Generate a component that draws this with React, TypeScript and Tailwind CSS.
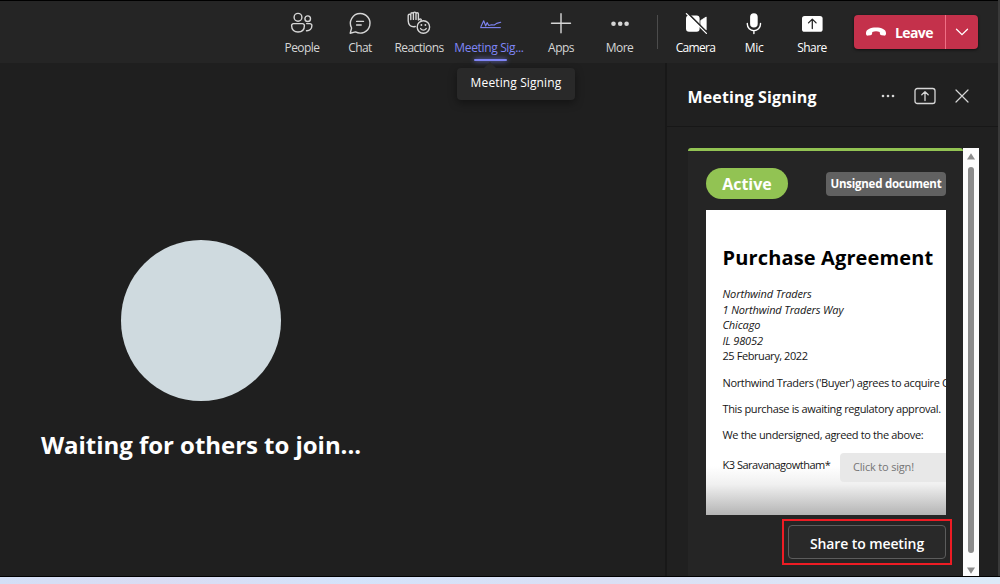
import type { ReactNode } from "react";

function ToolItem({ label, width, color = "text-[#d6d6d6]", track = "tracking-[-0.55px]", children }: {
  label: string; width: string; color?: string; track?: string; children: ReactNode;
}) {
  return (
    <button className={`flex flex-col items-center ${width} ${color}`}>
      <svg viewBox="0 0 24 24" className="h-6 w-6 shrink-0 overflow-visible" fill="none" stroke="currentColor" strokeWidth="1.4" strokeLinecap="round" strokeLinejoin="round">
        {children}
      </svg>
      <span className={`mt-[4.5px] whitespace-nowrap text-[12px] leading-4 ${track}`}>{label}</span>
    </button>
  );
}

function Toolbar() {
  return (
    <header className="flex h-[63px] shrink-0 border-t-[1px] border-black bg-[#252525] pl-[273px] pt-[10px]">
      <ToolItem label="People" width="w-[58px]">
        <circle cx="8" cy="6.3" r="3.9" />
        <circle cx="17.7" cy="7.7" r="2.8" />
        <path d="M3.5 12.6h9a1.9 1.9 0 0 1 1.9 1.9c0 4.5-2.9 6.5-6.4 6.5s-6.4-2-6.4-6.5a1.9 1.9 0 0 1 1.9-1.9Z" />
        <path d="M16.6 12.6H20a1.9 1.9 0 0 1 1.9 1.9c0 3.6-2.4 5.4-5.4 5.2" />
      </ToolItem>
      <ToolItem label="Chat" width="w-[58px]">
        <path d="M12.2 2.5a9.8 9.8 0 1 1-4.7 18.4L2.2 22.2l1.4-5.2a9.8 9.8 0 0 1 8.6-14.5Z" />
        <path d="M8.6 10.4h6.9M8.6 14h4.6" />
      </ToolItem>
      <ToolItem label="Reactions" width="w-[60px]">
        <path d="M8.3 15.5C3.6 16.4 1.2 13.6 1.2 9.8V4.6a1.3 1.3 0 0 1 2.6 0V3a1.3 1.3 0 0 1 2.6 0v-.6a1.3 1.3 0 0 1 2.6 0V3a1.2 1.2 0 0 1 2.4 0v6l1.4-.9c.9-.5 1.9.3 1.3 1.2M3.8 4.6v4M6.4 3v5.4M9 3v5.4" />
        <circle cx="16.4" cy="16" r="6.2" />
        <path d="M13.6 17.6c1.4 2 4.2 2 5.6 0" />
        <path d="M14.4 14v.1M18.4 14v.1" strokeWidth="1.9" />
      </ToolItem>
      <div className="relative flex">
        <ToolItem label="Meeting Sig..." width="w-[80px]" color="text-[#7f85f5]" track="tracking-[-0.35px]">
          <path d="M3.2 16.6h20.6" strokeWidth="1.1" strokeLinecap="butt" />
          <path d="m4 15.5 2.7-5.8 2 5.3 1.4-3.4 1.7 2.9 2.9-.8 2.6.3 2.4-1.6 4-1.2" strokeWidth="1.1" />
        </ToolItem>
        <span className="absolute left-[25px] top-[48px] h-[2px] w-[33px] rounded-full bg-[#7f85f5] shadow-[0_0_5px_#7f85f5]" />
        <div className="absolute left-[8px] top-[57px] z-10 flex h-[32px] w-[118px] items-center justify-center rounded bg-[#292929] pb-0.5 shadow-[0_3px_8px_rgba(0,0,0,0.4)]">
          <span className="absolute -top-[4px] left-[28px] h-[10px] w-[10px] rotate-45 bg-[#292929]" />
          <span className="whitespace-nowrap text-[12px] tracking-[0.12px] text-white">Meeting Signing</span>
        </div>
      </div>
      <ToolItem label="Apps" width="w-[64px]">
        <path d="M12 2.7v19M2.5 12.2h19" />
      </ToolItem>
      <ToolItem label="More" width="w-[53px]">
        <g fill="currentColor" stroke="none">
          <circle cx="5.5" cy="12.7" r="2.3" />
          <circle cx="12.2" cy="12.7" r="2.3" />
          <circle cx="18.6" cy="12.7" r="2.3" />
        </g>
      </ToolItem>
      <div className="ml-[11px] mr-[8px] mt-1 h-[34px] w-px bg-[#4c4c4c]" />
      <ToolItem label="Camera" width="w-[59px]" color="text-white" track="tracking-[-0.7px]">
        <rect x="2" y="4.6" width="13.6" height="16.2" rx="3" fill="currentColor" stroke="none" />
        <path d="M17 9.3 22.2 6v13L17 15.8Z" fill="currentColor" strokeWidth=".8" />
        <path d="m3.9 2.4 20 20" stroke="#252525" strokeWidth="2" />
        <path d="m2.4 2.6 20 19.8" strokeWidth="1.3" />
      </ToolItem>
      <ToolItem label="Mic" width="w-[58px]" color="text-white" track="tracking-[-0.3px]">
        <rect x="8.1" y="2.2" width="7.6" height="14.4" rx="3.8" fill="currentColor" stroke="none" />
        <path d="M5.3 12.5v.6a6.6 6.6 0 0 0 13.2 0v-.6M11.9 19.7v2.8" />
      </ToolItem>
      <ToolItem label="Share" width="w-[58px]" color="text-white">
        <rect x="2" y="5" width="20.6" height="15.8" rx="2.6" fill="currentColor" stroke="none" />
        <path d="M12.3 17.6V8.3m-3.8 3.6 3.8-3.8 3.8 3.8" stroke="#252525" strokeWidth="1.3" />
      </ToolItem>
      <div className="ml-[13px] mt-1 flex h-[34px] w-[124px] overflow-hidden rounded bg-[#c4314b] text-white shadow-[0_1px_3px_rgba(0,0,0,0.6)]">
        <button className="flex w-[92px] items-center border-r border-[#ef6f85] pl-[11px]">
          <svg viewBox="0 0 22 10" className="h-[10px] w-[22px]" fill="currentColor">
            <path d="M11 .6c5.5 0 10 2 10 5.3v.8c0 1.3-1 2.1-2.2 1.9l-2.2-.4c-1-.2-1.6-.9-1.7-1.8l-.2-1.5C13.5 4.500 12.3 4.300 11 4.300s-2.500.2-3.700.6l-.2 1.500c-.1.900-.7 1.600-1.700 1.800l-2.200.4C2 8.800 1 8 1 6.700v-.8C1 2.600 5.500.6 11 .6Z" />
          </svg>
          <span className="ml-[8px] text-[14px] font-bold tracking-[-0.6px]">Leave</span>
        </button>
        <button className="flex flex-1 items-center justify-center">
          <svg viewBox="0 0 14 8" className="h-2 w-3.5" fill="none" stroke="currentColor" strokeWidth="1.3" strokeLinecap="round">
            <path d="m1.5 1.2 5.5 5.5 5.5-5.5" />
          </svg>
        </button>
      </div>
    </header>
  );
}

function Stage() {
  return (
    <main className="flex w-[665px] shrink-0 flex-col bg-[#1f1f1f] pt-[177px]">
      <div className="flex w-[402px] flex-col items-center">
        <div className="h-[161px] w-[160px] rounded-full bg-[#cfdadf]" />
        <h1 className="mt-[26px] whitespace-nowrap text-[24px] font-bold leading-9 tracking-[-0.04px] text-white">
          Waiting for others to join...
        </h1>
      </div>
    </main>
  );
}

function Agreement() {
  return (
    <div className="mt-[11px] h-[305px] w-[240px] overflow-hidden bg-[linear-gradient(to_bottom,#fff_84%,#f0f0f0_90%,#b4b4b4_100%)] pl-[16.5px] pt-[34px] text-[11px] leading-[15.5px] tracking-[-0.35px] text-[#161616]">
      <h2 className="whitespace-nowrap text-[20px] font-bold leading-7 tracking-[0.14px] text-black">Purchase Agreement</h2>
      <address className="mt-[14px] tracking-[-0.13px]">
        Northwind Traders<br />1 Northwind Traders Way<br />Chicago<br />IL 98052
      </address>
      <p className="tracking-[-0.42px]">25 February, 2022</p>
      <p className="mt-[11px] whitespace-nowrap">Northwind Traders ('Buyer') agrees to acquire Contoso</p>
      <p className="mt-[10.5px] whitespace-nowrap">This purchase is awaiting regulatory approval.</p>
      <p className="mt-[10.5px] whitespace-nowrap">We the undersigned, agreed to the above:</p>
      <div className="mt-[10.5px] flex">
        <span className="mt-[4.5px] w-[117.5px] shrink-0 whitespace-nowrap tracking-[-0.5px]">K3 Saravanagowtham*</span>
        <span className="flex h-[29px] w-[160px] shrink-0 items-center rounded bg-[#e8e8e8] pb-px pl-[13px] tracking-[-0.18px] text-[#757575]">Click to sign!</span>
      </div>
    </div>
  );
}

function Scrollbar() {
  return (
    <div className="flex w-[16px] flex-col items-center bg-[#fcfcfc] pt-[5px]">
      <svg viewBox="0 0 8 7" className="h-[7px] w-2" fill="#8b8b8b"><path d="M4 .3 8 6.5H0Z" /></svg>
      <div className="mt-[7px] h-[386px] w-[6px] rounded-full bg-[#8b8b8b]" />
      <svg viewBox="0 0 8 7" className="mt-[14px] h-[7px] w-2" fill="#8b8b8b"><path d="M0 .5h8L4 6.7Z" /></svg>
    </div>
  );
}

function SidePanel() {
  return (
    <aside className="flex min-w-0 flex-1 flex-col border-l-2 border-[#181818] bg-[#202020]">
      <div className="flex h-[64px] shrink-0 items-center border-b border-[#171717] pl-[20.5px] pt-[3px] text-[#d6d6d6]">
        <h2 className="w-[192.5px] whitespace-nowrap pt-px text-[16px] font-bold tracking-[0.13px] text-white">Meeting Signing</h2>
        <svg viewBox="0 0 16 4" className="h-1 w-4" fill="currentColor">
          <circle cx="3" cy="2" r="1.3" /><circle cx="8" cy="2" r="1.3" /><circle cx="13" cy="2" r="1.3" />
        </svg>
        <svg viewBox="0 0 22 18" className="ml-[18px] h-[18px] w-[22px]" fill="none" stroke="currentColor" strokeWidth="1.3" strokeLinecap="round" strokeLinejoin="round">
          <rect x="1" y="1.500" width="20" height="15" rx="2.300" /><path d="M11 13.500V4.800M7.800 7.800 11 4.600l3.200 3.200" />
        </svg>
        <svg viewBox="0 0 14 14" className="ml-[19px] h-3.5 w-3.5" fill="none" stroke="currentColor" strokeWidth="1.2" strokeLinecap="round">
          <path d="m1 1 12 12M13 1 1 13" />
        </svg>
      </div>
      <div className="mt-[21px] flex h-[428px] pl-[21px]">
        <section className="w-[275px] shrink-0 rounded-t-[3px] border-t-[3px] border-[#92c353] bg-[#252525] pl-[18px] pr-[17px] pt-[17px]">
          <div className="flex h-[31px] items-center justify-between text-white">
            <span className="flex h-[31px] w-[82px] items-center justify-center rounded-full bg-[#92c353] text-[16px] font-bold tracking-[-0.05px]">Active</span>
            <span className="flex h-[24px] w-[120px] items-center justify-center whitespace-nowrap rounded bg-[#616161] text-[11.5px] font-bold tracking-[-0.25px]">Unsigned document</span>
          </div>
          <Agreement />
          <div className="-mr-[6px] mt-[4px] flex justify-end">
            <div className="h-[46px] w-[170px] border-2 border-[#ed1c24] p-1">
              <button className="flex h-full w-full items-center justify-center rounded border border-[#5c5c5c] bg-[#292929] pt-0.5 text-[14px] font-semibold tracking-[-0.1px] text-white">Share to meeting</button>
            </div>
          </div>
        </section>
        <Scrollbar />
      </div>
    </aside>
  );
}

export default function App() {
  return (
    <div className="flex h-[584px] w-[1000px] flex-col overflow-hidden bg-[#202020] font-['Open_Sans','Noto_Sans',sans-serif]">
      <div className="flex flex-1 flex-col border-r-2 border-[#393939]">
        <Toolbar />
        <div className="flex h-[513px]">
          <Stage />
          <SidePanel />
        </div>
      </div>
      <div className="h-[8px] shrink-0 border-t border-black bg-[linear-gradient(to_right,#d3dff6,#dadcf3_16%,#d4e3fa_35%,#dadff4_60%,#dceaf8)]" />
    </div>
  );
}
